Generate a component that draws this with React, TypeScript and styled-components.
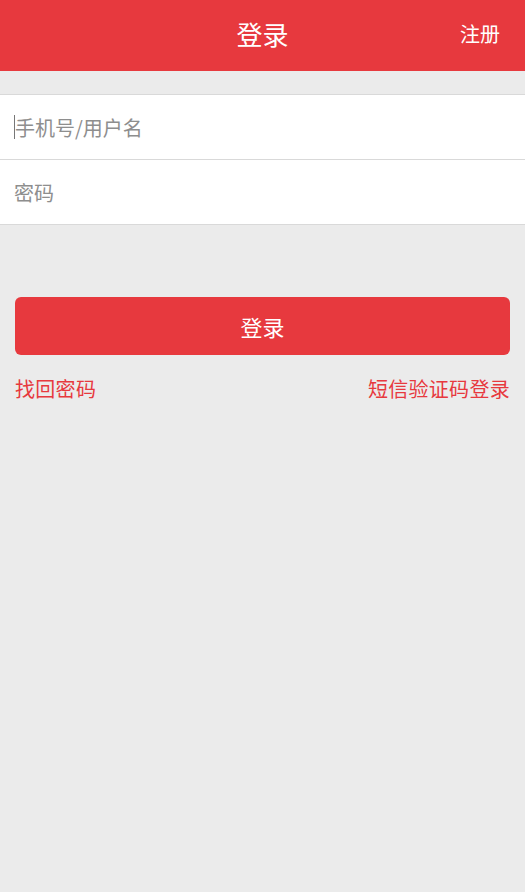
import React from 'react'
import styled, { createGlobalStyle } from 'styled-components'

const GlobalStyle = createGlobalStyle`
  html, body {
    margin: 0;
    padding: 0;
    background: #ebebeb;
    font-family: "Noto Sans CJK SC", "Noto Sans", sans-serif;
  }
`

const App = () => {
  return (
    <>
      <GlobalStyle />
      <Page>
        <Header>
          <HeaderTitle>登录</HeaderTitle>
          <HeaderAction>注册</HeaderAction>
        </Header>
        <Form>
          <Field>
            <Caret />
            <Placeholder>手机号/用户名</Placeholder>
          </Field>
          <Field>
            <Placeholder>密码</Placeholder>
          </Field>
        </Form>
        <Actions>
          <SubmitButton>登录</SubmitButton>
          <LinkRow>
            <TextLink>找回密码</TextLink>
            <TextLink>短信验证码登录</TextLink>
          </LinkRow>
        </Actions>
      </Page>
    </>
  )
}

const Page = styled.div`
  width: 525px;
  min-height: 892px;
  background: #ebebeb;
`

const Header = styled.div`
  position: relative;
  box-sizing: border-box;
  height: 71px;
  padding-bottom: 4px;
  background: #e7393e;
  display: flex;
  align-items: center;
  justify-content: center;
`

const HeaderTitle = styled.h1`
  margin: 0;
  font-size: 26px;
  font-weight: 400;
  color: #fff;
`

const HeaderAction = styled.span`
  position: absolute;
  right: 25px;
  top: 33px;
  transform: translateY(-50%);
  font-size: 20px;
  color: #fff;
`

const Form = styled.div`
  margin-top: 23px;
  background: #fff;
  border-top: 1px solid #d9d9d9;
`

const Field = styled.div`
  height: 64px;
  display: flex;
  align-items: center;
  padding-left: 14px;
  border-bottom: 1px solid #d9d9d9;
`

const Caret = styled.span`
  display: inline-block;
  width: 1px;
  height: 24px;
  background: #777;
`

const Placeholder = styled.span`
  font-size: 20px;
  color: #8e8e8e;
`

const Actions = styled.div`
  padding: 72px 15px 0 15px;
`

const SubmitButton = styled.button`
  display: block;
  width: 100%;
  height: 58px;
  border: none;
  border-radius: 6px;
  background: #e7393e;
  color: #fff;
  font-family: "Noto Sans CJK SC", sans-serif;
  font-size: 22px;
`

const LinkRow = styled.div`
  display: flex;
  justify-content: space-between;
  margin-top: 19px;
`

const TextLink = styled.span`
  font-size: 20px;
  letter-spacing: 0.3px;
  color: #e7393e;
`

export default App
